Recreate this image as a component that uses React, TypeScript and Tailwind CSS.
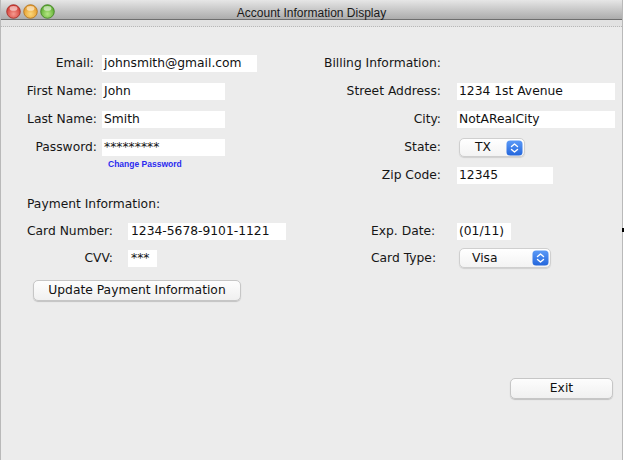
const field = "h-[17px] bg-white pl-[2px] leading-[17px] text-[#111] whitespace-nowrap overflow-hidden"
const label = "text-right whitespace-nowrap text-[#161616]"
const macButton =
  "flex items-center justify-center h-[21px] rounded-[5px] border border-[#c6c6c6] bg-linear-to-b from-[#fdfdfd] to-[#f0f0f0] shadow-[0_1px_1px_rgba(0,0,0,0.18)] text-[#111]"

function Light({ id, base, hi, edge }: { id: string; base: string; hi: string; edge: string }) {
  return (
    <svg width="15" height="15" viewBox="0 0 15 15">
      <defs>
        <radialGradient id={id} cx="50%" cy="68%" r="60%">
          <stop offset="0%" stopColor={hi} />
          <stop offset="100%" stopColor={base} />
        </radialGradient>
      </defs>
      <circle cx="7.5" cy="7.5" r="6.8" fill={`url(#${id})`} stroke={edge} strokeWidth="0.8" />
      <ellipse cx="7.5" cy="4.4" rx="3.9" ry="2.4" fill="white" opacity="0.55" />
    </svg>
  )
}

function Stepper() {
  return (
    <svg width="17" height="16" viewBox="0 0 17 16">
      <defs>
        <linearGradient id="blue" x1="0" y1="0" x2="0" y2="1">
          <stop offset="0%" stopColor="#5b9af7" />
          <stop offset="100%" stopColor="#2466dc" />
        </linearGradient>
      </defs>
      <rect x="0.5" y="0.5" width="16" height="15" rx="3.5" fill="url(#blue)" />
      <path d="M5.5 6.5 L8.5 4 L11.5 6.5" fill="none" stroke="white" strokeWidth="1.4" strokeLinecap="round" strokeLinejoin="round" />
      <path d="M5.5 9.5 L8.5 12 L11.5 9.5" fill="none" stroke="white" strokeWidth="1.4" strokeLinecap="round" strokeLinejoin="round" />
    </svg>
  )
}

function PopUp({ value, width, height, textPad }: { value: string; width: string; height: string; textPad: string }) {
  return (
    <div
      className={`flex items-center justify-between ${width} ${height} rounded-[5px] border border-[#cfcfcf] bg-linear-to-b from-[#ffffff] to-[#f3f3f3] shadow-[0_1px_1px_rgba(0,0,0,0.12)] pr-[1px] ${textPad}`}
    >
      <span className="text-[#111]">{value}</span>
      <Stepper />
    </div>
  )
}

export default function App() {
  return (
    <div className="relative w-[624px] h-[460px] bg-white overflow-hidden font-['DejaVu_Sans',sans-serif] text-[12.3px]">
      <div className="flex flex-col w-[623px] h-[460px] border-l border-r border-[#b9b9b9]">
        {/* title bar */}
        <div className="grid grid-cols-[1fr_auto_1fr] items-center h-[20px] bg-linear-to-b from-[#e6e6e6] to-[#acacac] border-b border-[#6e6e6e]">
          <div className="flex items-center gap-[2px] pl-[5px] pt-[1px]">
            <Light id="r" base="#d23a32" hi="#f59a8f" edge="#a02a24" />
            <Light id="o" base="#e59a2a" hi="#fbd77a" edge="#b07018" />
            <Light id="g" base="#5aab2e" hi="#b5e683" edge="#3e7f1d" />
          </div>
          <div className="font-['Liberation_Sans',sans-serif] text-[12px] text-[#1a1a1a] pt-[4px]">Account Information Display</div>
          <div />
        </div>
        <div className="h-[7px] bg-[#e2e2e2] border-b border-dotted border-[#b8b8b8]" />

        {/* content */}
        <div className="flex-1 flex flex-col bg-[#ececec] pt-[28px]">
          <div className="flex">
            <div className="w-[311px] flex flex-col">
              <div className="grid grid-cols-[96px_auto] gap-x-[5px] gap-y-[11px] auto-rows-[17px] items-center justify-start">
                <span className={`${label} pr-[3px]`}>Email:</span>
                <div className={`${field} w-[155px]`}>johnsmith@gmail.com</div>
                <span className={label}>First Name:</span>
                <div className={`${field} w-[123px]`}>John</div>
                <span className={label}>Last Name:</span>
                <div className={`${field} w-[123px]`}>Smith</div>
                <span className={label}>Password:</span>
                <div className={`${field} w-[123px]`}>*********</div>
              </div>
              <div className="pl-[107px] mt-[3px] font-['Liberation_Sans',sans-serif] text-[8.5px] font-bold leading-[10px] text-[#2a2af0]">
                Change Password
              </div>
            </div>

            <div className="grid grid-cols-[129px_auto] gap-x-[16px] gap-y-[11px] auto-rows-[17px] items-center justify-start">
              <span className="col-span-2 pl-[12px] whitespace-nowrap text-[#161616]">Billing Information:</span>
              <span className={label}>Street Address:</span>
              <div className={`${field} w-[158px]`}>1234 1st Avenue</div>
              <span className={label}>City:</span>
              <div className={`${field} w-[158px]`}>NotARealCity</div>
              <span className={label}>State:</span>
              <div className="ml-[2px]">
                <PopUp value="TX" width="w-[66px]" height="h-[19px]" textPad="pl-[15px]" />
              </div>
              <span className={label}>Zip Code:</span>
              <div className={`${field} w-[96px]`}>12345</div>
            </div>
          </div>

          <div className="mt-[12px] h-[17px] leading-[17px] pl-[26px] text-[#161616]">Payment Information:</div>

          <div className="flex items-center h-[20px] mt-[8px]">
            <div className="w-[312px] flex items-center">
              <span className={`${label} w-[112px]`}>Card Number:</span>
              <div className={`${field} ml-[15px] w-[158px] pl-[3px]`}>1234-5678-9101-1121</div>
            </div>
            <div className="flex items-center pl-[58px]">
              <span className="w-[86px] whitespace-nowrap text-[#161616]">Exp. Date:</span>
              <div className={`${field} w-[54px]`}>(01/11)</div>
            </div>
          </div>

          <div className="flex items-center h-[20px] mt-[7px]">
            <div className="w-[312px] flex items-center">
              <span className={`${label} w-[112px]`}>CVV:</span>
              <div className={`${field} ml-[15px] w-[29px] pl-[3px]`}>***</div>
            </div>
            <div className="flex items-center pl-[58px]">
              <span className="w-[86px] whitespace-nowrap text-[#161616]">Card Type:</span>
              <div className="ml-[2px]">
                <PopUp value="Visa" width="w-[92px]" height="h-[20px]" textPad="pl-[12px]" />
              </div>
            </div>
          </div>

          <button className={`${macButton} mt-[12px] ml-[32px] w-[208px]`}>Update Payment Information</button>

          <button className={`${macButton} mt-[77px] self-end mr-[9px] w-[103px]`}>Exit</button>
        </div>
      </div>

      {/* stray pointer mark at the right edge */}
      <div className="absolute left-[622px] top-[228px] w-[2px] h-[4px] bg-black" />
    </div>
  )
}
